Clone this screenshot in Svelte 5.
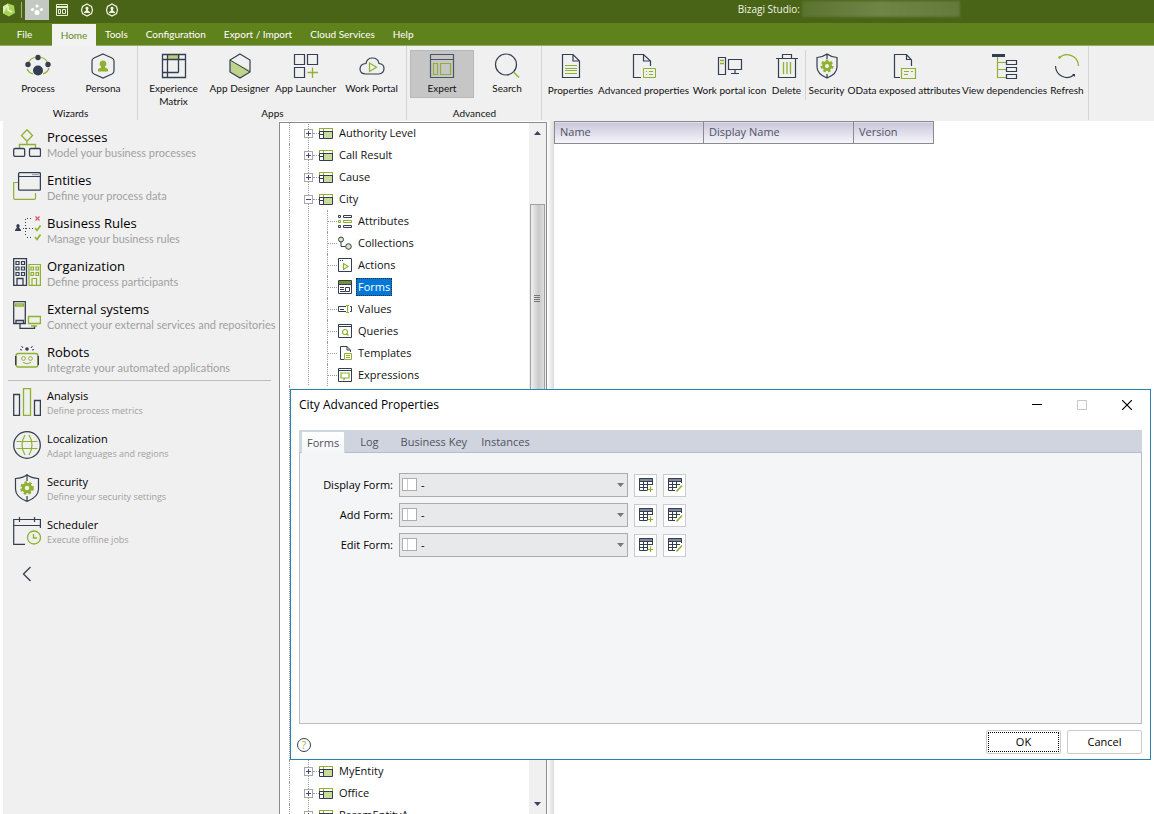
<script>
  const N = '#333f50';
  const G = '#8fb12f';

  const gear = (cx, cy, r) =>
    `<circle cx="${cx}" cy="${cy}" r="${r}" fill="none" stroke="${G}" stroke-width="3"/><circle cx="${cx}" cy="${cy}" r="${r + 2}" fill="none" stroke="${G}" stroke-width="2" stroke-dasharray="2.6 2.2"/>`;

  const icons = {
    logo: [14, `<path d="M6 0.5L12 2.5L13 10L7 13.5L1 10.5L1 3.5Z" fill="#a8d254"/><path d="M6 3V7L10 9" fill="none" stroke="#eef8d8" stroke-width="1.5"/><path d="M1 3.5L6 .5V3L3 8L1 10.5Z" fill="#d8efae"/>`],
    quickProcess: [14, `<g fill="#fff"><circle cx="7" cy="3" r="1.5"/><circle cx="2.5" cy="6.5" r="1.6"/><circle cx="11.5" cy="6.5" r="1.6"/><circle cx="7" cy="9.5" r="2.5"/></g>`],
    quickForm: [14, `<g fill="none" stroke="#e8f0d4"><path d="M1.5 1.5H12.5V12.5H1.5ZM1.5 4.5H12.5M1.5 3.5H12.5M3.5 6.5H5.5V10.5H3.5ZM7.5 6.5H10.5V10.5H7.5Z"/></g>`],
    quickPersona: [14, `<path d="M7 1L11.5 3.5L12.5 7L11.5 10.5L7 13L2.5 10.5L1.5 7L2.5 3.5Z" fill="none" stroke="#eef4e0" stroke-width="1.2"/><path d="M7 3.800A1.500 1.500 0 0 1 8 6.500L8 7.500L10 9V10H4V9L6 7.500V6.500A1.500 1.500 0 0 1 7 3.800Z" fill="#eef4e0"/>`],
    process: [28, `<path d="M4 12Q6 6 11 5.5M17 5.5Q22 6 24 12M3 17Q5 21 9 22M19 22Q24 20 25 16" fill="none" stroke="${G}" stroke-width="1.2"/><g fill="${N}"><circle cx="14" cy="5.500" r="2.700"/><circle cx="4" cy="12.500" r="2.700"/><circle cx="24" cy="12.500" r="2.700"/><circle cx="14" cy="18.500" r="5"/></g>`],
    persona: [28, `<path d="M14 2L23 6Q25 7 25 9V19Q25 21 23 22L14 26L5 22Q3 21 3 19V9Q3 7 5 6Z" fill="none" stroke="${N}" stroke-width="1.2"/><path d="M14 8.500A3.300 3.300 0 0 1 16 14.500L16 15.500L19 17V19.500H9V17L12 15.500V14.500A3.300 3.300 0 0 1 14 8.500Z" fill="${G}"/>`],
    matrix: [28, `<path d="M8 3H20V7H8Z" fill="#b9cf7d"/><path d="M2.500 2.500H25.500V25.500H2.500ZM2.500 7.500H25.500M7.500 2.500V25.500M18.500 2.500V20.500M2.500 20.500H18.500" fill="none" stroke="${N}" stroke-width="1.3"/>`],
    designer: [28, `<path d="M4 8L24 18V20L14 26L4 20Z" fill="#c0d38c"/><path d="M14 2L24 8V20L14 26L4 20V8Z" fill="none" stroke="${N}" stroke-width="1.2"/><path d="M4 8L24 20" stroke="${N}"/>`],
    launcher: [28, `<path d="M2.500 2.500H12.500V12.500H2.500ZM15.500 2.500H25.500V12.500H15.500ZM2.500 15.500H12.500V25.500H2.500Z" fill="none" stroke="${N}" stroke-width="1.2"/><path d="M20.500 15.500V26M15.500 20.500H26" stroke="${G}" stroke-width="1.3"/>`],
    portal: [28, `<path d="M8 22H20.500Q26 21.500 26 16.500Q26 12 21 11.500Q20 6 14.500 6Q9 6 8 11.500Q2 12 2 17Q2 22 8 22Z" fill="none" stroke="${N}" stroke-width="1.200"/><path d="M11.500 11V19.500L18.500 15.200Z" fill="none" stroke="${G}" stroke-width="1.200"/>`],
    expert: [28, `<path d="M2.500 2.500H25.500V25.500H2.500ZM2.500 7.500H25.500" fill="none" stroke="#4d5665" stroke-width="1.200"/><path d="M5.500 11.500H9.500V22.500H5.500ZM12.500 11.500H22.500V22.500H12.500Z" fill="none" stroke="${G}" stroke-width="1.200"/>`],
    search: [28, `<circle cx="13" cy="12.500" r="10.500" fill="none" stroke="${N}" stroke-width="1.200"/><path d="M20.500 20L26 25.500" stroke="${G}" stroke-width="1.400"/>`],
    properties: [28, `<path d="M5.500 2.500H16L22.500 9V25.500H5.500ZM16 2.500V9H22.500" fill="none" stroke="${N}" stroke-width="1.200"/><path d="M8 13.500H20M8 16.500H20M8 18.500H20M8 21.500H20" stroke="${G}"/>`],
    advanced: [28, `<path d="M11 25.500H3.500V2.500H13.500L20.500 9V14M13.500 2.500V9H20.500" fill="none" stroke="${N}" stroke-width="1.200"/><path d="M13.500 16.500H25.500V25.500H13.500ZM16 19.500H17M19 19.500H23M16 22.500H17M19 22.500H23" fill="none" stroke="${G}"/>`],
    portalIcon: [28, `<path d="M2.500 5.500H9.500V22.500H2.500ZM12.500 7.500H25.500V17.500H12.500ZM19 17.500V21.500M15 21.500H23" fill="none" stroke="${N}" stroke-width="1.200"/><path d="M4 8.500H8M4 11.500H8" stroke="${G}" stroke-width="1.300"/>`],
    trash: [28, `<path d="M3 6.500H25M9.500 6V2.500H18.500V6M5.500 6.500V25.500H22.500V6.500" fill="none" stroke="${N}" stroke-width="1.200"/><path d="M10.500 10V22M14 10V22M17.500 10V22" stroke="${G}" stroke-width="1.300"/>`],
    shield: [28, `<path d="M14 2Q18 5 24 5.500V15Q24 22 14 26Q4 22 4 15V5.500Q10 5 14 2ZM14 2V7M14 22V26" fill="none" stroke="${N}" stroke-width="1.200"/>${gear(14, 14, 3.500)}`],
    odata: [28, `<path d="M10 25.500H4.500V2.500H16.500L21.500 8V14M16.500 2.500V7.500H21.500" fill="none" stroke="${N}" stroke-width="1.200"/><path d="M11.500 16.500H25.500V26.500H11.500ZM14 19.500H19M21 19.500H23M14 22.500H18" fill="none" stroke="${G}" stroke-width="1.200"/>`],
    deps: [28, `<path d="M1 2H14V5H1Z" fill="${N}"/><path d="M6.500 5V25.500H15M6.500 10.500H15M6.500 17.500H15" fill="none" stroke="${G}" stroke-width="1.200"/><path d="M15.500 8.500H25.500V12.500H15.500ZM15.500 15.500H25.500V19.500H15.500ZM15.500 22.500H25.500V26.500H15.500Z" fill="none" stroke="${N}" stroke-width="1.200"/>`],
    refresh: [28, `<path d="M6 6A11.500 11.500 0 0 1 25.500 14" fill="none" stroke="${G}" stroke-width="1.300"/><circle cx="6.500" cy="5.500" r="1.200" fill="${G}"/><path d="M2.500 14A11.500 11.500 0 0 0 21 23" fill="none" stroke="${N}" stroke-width="1.200"/><path d="M19 22H22V25Z" fill="${N}"/>`],

    navProcesses: [28, `<path d="M14 .8L19.500 6.500L14 12.200L8.500 6.500ZM14 12V16M6.500 19V15.500H22.500V19" fill="none" stroke="${G}" stroke-width="1.300"/><rect x=".7" y="19.500" width="11" height="8" rx="1.500" fill="none" stroke="${N}" stroke-width="1.300"/><rect x="16.500" y="19.500" width="11" height="8" rx="1.500" fill="none" stroke="${N}" stroke-width="1.300"/>`],
    navEntities: [28, `<path d="M5 10.500H.7V26Q.7 27.400 2 27.400H21Q22.500 27.400 22.500 26V21" fill="none" stroke="${G}" stroke-width="1.200"/><rect x="5.600" y=".7" width="21.800" height="17.500" rx="1" fill="none" stroke="${N}" stroke-width="1.300"/><path d="M6 4.500H27" stroke="${N}"/><path d="M19.500 2.700H26" stroke="${N}" stroke-dasharray="1 1"/>`],
    navRules: [28, `<path d="M5 9A2 2 0 0 1 6 12.500L8 15V16H2V15L4 12.500A2 2 0 0 1 5 9Z" fill="${N}"/><path d="M10 13.500H20M12.500 4V22M14 3.500H20M14 22.500H20" fill="none" stroke="${N}" stroke-dasharray="1 2"/><path d="M22.500 1.500L26.500 5.500M26.500 1.500L22.500 5.500" stroke="#d9546b" stroke-width="1.200"/><path d="M22 13L24 15.500L27.500 10.500M22 22L24 24.500L27.500 19.500" fill="none" stroke="${G}" stroke-width="1.600"/>`],
    navOrg: [28, `<path d="M.7 .7H13.500V27.400H.7ZM4 27V20.500H10V27" fill="none" stroke="${N}" stroke-width="1.300"/><path d="M3 3.500H6V6.500H3ZM8.500 3.500H11.500V6.500H8.500ZM3 9H6V12H3ZM8.500 9H11.500V12H8.500ZM3 14.500H6V17.500H3ZM8.500 14.500H11.500V17.500H8.500Z" fill="none" stroke="${N}" stroke-width="1.200"/><path d="M16 27.400V6.500H27.400V27.400H16M19 27V20.500H23.500V27M18 9H20.500V12H18ZM23 9H25.500V12H23ZM18 14.500H20.500V17.500H18ZM23 14.500H25.500V17.500H23Z" fill="none" stroke="${G}" stroke-width="1.200"/>`],
    navExternal: [28, `<path d="M.7 .7H12.300V22.500H.7ZM3 22V19.500H10.500V22M7 23V27.400H21.500V25" fill="none" stroke="${N}" stroke-width="1.300"/><path d="M2.500 3H10.500V5H2.500ZM15.500 15.500H27.400V22.500H15.500ZM18 25H24" fill="none" stroke="${G}" stroke-width="1.300"/>`],
    navRobots: [28, `<circle cx="14" cy="5" r="1.800" fill="${N}"/><path d="M8.500 2L10 4M19.500 2L18 4M7 5.500L9 6M21 5.500L19 6" stroke="${N}"/><rect x="3" y="9.500" width="22" height="13.500" rx="2.500" fill="none" stroke="${G}" stroke-width="1.400"/><path d="M2.700 12V21M25.300 12V21" stroke="${N}" stroke-width="1.400"/><circle cx="10.500" cy="14.500" r="1.900" fill="none" stroke="${G}"/><circle cx="17.500" cy="14.500" r="1.900" fill="none" stroke="${G}"/><path d="M10 18.500Q14 21 18 18.500" fill="none" stroke="${G}"/>`],
    navAnalysis: [28, `<path d="M.7 6.500H6.500V27.400H.7ZM21.500 12.500H27.400V27.400H21.500Z" fill="none" stroke="${N}" stroke-width="1.300"/><path d="M10.500 .7H17.500V27.400H10.500Z" fill="none" stroke="${G}" stroke-width="1.300"/>`],
    navLocal: [28, `<circle cx="14" cy="14" r="13.300" fill="none" stroke="${N}" stroke-width="1.300"/><path d="M3.500 10.500H24.500M3.500 17.500H24.500M12 4Q6 14 12 24M16 4Q22 14 16 24" fill="none" stroke="${G}" stroke-width="1.200"/>`],
    navSecurity: [28, `<path d="M14 .7Q18 4 25.500 4.500V15Q25.500 23 14 27.400Q2.500 23 2.500 15V4.500Q10 4 14 .7ZM14 1V7M14 22V27" fill="none" stroke="${N}" stroke-width="1.200"/>${gear(14, 14, 3.800)}`],
    navScheduler: [28, `<path d="M12 27.400H.7V2.500H27.400V11M.7 8.500H27M6.500 0V5M21.500 0V5" fill="none" stroke="${N}" stroke-width="1.200"/><circle cx="21" cy="20.500" r="6.500" fill="none" stroke="${G}" stroke-width="1.300"/><path d="M20.500 17V21H24" fill="none" stroke="${G}" stroke-width="1.300"/>`],

    entity: [14, `<path d="M5 6H13V12.500H5Z" fill="#c9dc9c"/><path d="M.5 2V5M13.500 2V5M.5 2.500H13.500M4.500 5V2.500" stroke="${G}" fill="none"/><path d="M.5 5V12.500H13.500V5M0 5.500H14M4.500 5.500V12M.5 8.500H4.500" fill="none" stroke="${N}"/>`],
    attributes: [14, `<path d="M.5 1.500H2.500V3.500H.5ZM5.500 1.500H13.500V3.500H5.500ZM.5 11.500H2.500V13.500H.5ZM5.500 11.500H13.500V13.500H5.500Z" fill="none" stroke="${N}"/><path d="M.5 6.500H2.500V8.500H.5ZM5.500 6.500H13.500V8.500H5.500Z" fill="none" stroke="${G}"/>`],
    collections: [14, `<circle cx="3" cy="3.500" r="2.500" fill="#dbe6bd" stroke="${N}"/><circle cx="10.500" cy="10.500" r="2.800" fill="#dbe6bd" stroke="${N}"/><path d="M3 6V10.500H7.500" fill="none" stroke="${N}"/>`],
    actions: [14, `<path d="M.5 .5H13.500V13.500H.5Z" fill="none" stroke="${N}"/><path d="M2 2.500H6" stroke="${N}" stroke-dasharray="1 1"/><path d="M5.500 5.500V11.500L10 8.500Z" fill="none" stroke="${G}" stroke-width="1.200"/>`],
    forms: [14, `<path d="M.5 .5H13.500V13.500H.5ZM.5 4.500H13.500M2 7.500H6M2 9.500H6M2 11.500H7M7.500 7.500H11.500V11.500H7.500Z" fill="none" stroke="${N}"/><path d="M1 1H13V4H1Z" fill="#74903a"/>`],
    values: [14, `<path d="M8 4.500H.5V9.500H8M12 4.500H13.500V9.500H12" fill="none" stroke="${N}"/><path d="M2 7.500H6" stroke="${N}"/><path d="M8 3.500H11M9.500 3.500V10.500M8 10.500H11" stroke="${G}"/>`],
    queries: [14, `<path d="M.5 .5H13.500V13.500H.5ZM.5 2.500H13.500" fill="none" stroke="${N}"/><circle cx="7" cy="8" r="2.500" fill="none" stroke="${G}" stroke-width="1.200"/><path d="M8.500 9.500L10.500 11.500" stroke="${G}" stroke-width="1.200"/>`],
    templates: [14, `<path d="M6 13.500H2.500V.5H9L12.500 4V6M9 .5V4H12" fill="none" stroke="${N}"/><path d="M6.500 7.500H13.500V13.500H6.500ZM8 9.500H12M8 11.500H12" fill="none" stroke="${G}"/>`],
    expressions: [14, `<path d="M.5 .5H13.500V13.500H.5ZM.5 2.500H13.500" fill="none" stroke="${N}"/><path d="M3 5H11V10H7L6 11.500V10H3Z" fill="none" stroke="${G}" stroke-width="1.200"/>`],
    gridAdd: [16, `<path d="M1 1H15V4H1Z" fill="#7f8a9c"/><path d="M1.500 1.500H14.500V8M1.500 1.500V13.500H9M1.500 4.500H14.500M1.500 7.500H14.500M1.500 10.500H10M5.500 4.500V13.500M9.500 4.500V13.500" fill="none" stroke="${N}"/><path d="M12.500 9.500V15M10 12.500H15" stroke="${G}" stroke-width="1.200"/>`],
    gridEdit: [16, `<path d="M1 1H15V4H1Z" fill="#7f8a9c"/><path d="M14.500 6V1.500H1.500V13.500H8M1.500 4.500H14.500M1.500 7.500H13M1.500 10.500H10M5.500 4.500V13.500M9.500 4.500V11" fill="none" stroke="${N}"/><path d="M15 8.500L9.500 14.500" stroke="${G}" stroke-width="1.600"/>`]
  };

  const menus = ['Tools', 'Configuration', 'Export / Import', 'Cloud Services', 'Help'];

  const groups = [
    { title: 'Wizards', items: [['Process', 'process'], ['Persona', 'persona']] },
    { title: 'Apps', items: [['Experience Matrix', 'matrix'], ['App Designer', 'designer'], ['App Launcher', 'launcher'], ['Work Portal', 'portal']] },
    { title: 'Advanced', items: [['Expert', 'expert'], ['Search', 'search']] }
  ];

  const tools = [
    ['Properties', 'properties'],
    ['Advanced properties', 'advanced'],
    ['Work portal icon', 'portalIcon'],
    ['Delete', 'trash'],
    ['Security', 'shield'],
    ['OData exposed attributes', 'odata'],
    ['View dependencies', 'deps'],
    ['Refresh', 'refresh']
  ];

  const primary = [
    ['Processes', 'Model your business processes', 'navProcesses'],
    ['Entities', 'Define your process data', 'navEntities'],
    ['Business Rules', 'Manage your business rules', 'navRules'],
    ['Organization', 'Define process participants', 'navOrg'],
    ['External systems', 'Connect your external services and repositories', 'navExternal'],
    ['Robots', 'Integrate your automated applications', 'navRobots']
  ];
  const secondary = [
    ['Analysis', 'Define process metrics', 'navAnalysis'],
    ['Localization', 'Adapt languages and regions', 'navLocal'],
    ['Security', 'Define your security settings', 'navSecurity'],
    ['Scheduler', 'Execute offline jobs', 'navScheduler']
  ];

  const entitiesTop = ['Authority Level', 'Call Result', 'Cause', 'City'];
  const entitiesBottom = ['MyEntity', 'Office', 'ParamEntityA'];
  const children = ['Attributes', 'Collections', 'Actions', 'Forms', 'Values', 'Queries', 'Templates', 'Expressions'];

  const columns = ['Name', 'Display Name', 'Version'];
  const tabs = ['Forms', 'Log', 'Business Key', 'Instances'];
  const fields = ['Display Form:', 'Add Form:', 'Edit Form:'];

  let activeTab = $state('Forms');
  let selected = $state('Forms');
</script>

{#snippet icon(name)}
  <svg class="icon" width={icons[name][0]} height={icons[name][0]} viewBox="0 0 {icons[name][0]} {icons[name][0]}" aria-hidden="true">{@html icons[name][1]}</svg>
{/snippet}

{#snippet entityRow(name, open)}
  <div class="row entity">
    <button class="toggle" aria-expanded={open} aria-label={name}>
      <svg width="9" height="9" viewBox="0 0 9 9"><path d={open ? 'M2 4.5H7' : 'M2 4.5H7M4.5 2V7'} stroke="#3d4a80" /></svg>
    </button>
    <span class="stub"></span>
    {@render icon('entity')}
    <span class="name">{name}</span>
  </div>
{/snippet}

{#snippet navItem(item)}
  <li>
    <a href="#{item[2]}">
      {@render icon(item[2])}
      <span class="nav-text"><strong>{item[0]}</strong><small>{item[1]}</small></span>
    </a>
  </li>
{/snippet}

<div class="app">
  <header class="titlebar">
    <div class="quick">
      <span class="logo">{@render icon('logo')}</span>
      <button class="current" aria-label="Process">{@render icon('quickProcess')}</button>
      <button aria-label="Expert">{@render icon('quickForm')}</button>
      <button aria-label="Persona">{@render icon('quickPersona')}</button>
      <button aria-label="Persona">{@render icon('quickPersona')}</button>
    </div>
    <div class="app-title">Bizagi Studio:<span class="redacted"></span></div>
  </header>

  <nav class="menubar">
    <button class="file">File</button>
    <button class="active">Home</button>
    {#each menus as m}<button>{m}</button>{/each}
  </nav>

  <div class="ribbon">
    {#each groups as g}
      <section class="group">
        <div class="group-items">
          {#each g.items as [label, ic]}
            <button class="tool" class:pressed={label === 'Expert'} class:two-line={ic === 'matrix'}>{@render icon(ic)}<span>{label}</span></button>
          {/each}
        </div>
        <h2>{g.title}</h2>
      </section>
    {/each}
    <section class="group toolset">
      {#each tools as [label, ic]}
        <button class="tool" class:divided={label === 'Delete'}>{@render icon(ic)}<span>{label}</span></button>
      {/each}
    </section>
  </div>

  <main>
    <nav class="sidebar">
      <ul class="primary">{#each primary as item}{@render navItem(item)}{/each}</ul>
      <ul class="secondary">{#each secondary as item}{@render navItem(item)}{/each}</ul>
      <button class="collapse" aria-label="Collapse">
        <svg width="10" height="16" viewBox="0 0 10 16"><path d="M8.500 1L1.500 8L8.500 15" fill="none" stroke="#333f50" stroke-width="1.300" /></svg>
      </button>
    </nav>

    <section class="tree-panel">
      <div class="tree">
        {#each entitiesTop as e}{@render entityRow(e, e === 'City')}{/each}
        <div class="children">
          {#each children as c}
            <div class="row child">
              <span class="stub"></span>
              {@render icon(c.toLowerCase())}
              <button class="name" class:selected={selected === c} onclick={() => (selected = c)}>{c}</button>
            </div>
          {/each}
        </div>
        <div class="covered"></div>
        {#each entitiesBottom as e}{@render entityRow(e, false)}{/each}
      </div>
      <div class="scrollbar">
        <svg width="7" height="4" viewBox="0 0 7 4"><path d="M0 4L3.500 0L7 4Z" fill="#3c4260" /></svg>
        <div class="thumb"><i></i></div>
        <svg width="7" height="4" viewBox="0 0 7 4"><path d="M0 0L3.500 4L7 0Z" fill="#3c4260" /></svg>
      </div>
    </section>

    <div class="splitter"></div>

    <section class="content">
      <table>
        <thead><tr>{#each columns as c}<th>{c}</th>{/each}</tr></thead>
      </table>
    </section>
  </main>

  <div class="dialog" role="dialog" aria-labelledby="dialog-title">
    <div class="dialog-head">
      <h1 id="dialog-title">City Advanced Properties</h1>
      <button aria-label="Minimize"><svg width="10" height="10" viewBox="0 0 10 10"><path d="M0 4.500H10" stroke="#000" /></svg></button>
      <button aria-label="Maximize"><svg width="10" height="10" viewBox="0 0 10 10"><path d="M.5 .5H9.500V9.500H.5Z" fill="none" stroke="#c8c8c8" /></svg></button>
      <button aria-label="Close"><svg width="10" height="10" viewBox="0 0 10 10"><path d="M0 0L10 10M10 0L0 10" stroke="#000" stroke-width="1.200" /></svg></button>
    </div>
    <div class="tab-box">
      <div class="tabs" role="tablist">
        {#each tabs as t}
          <button role="tab" aria-selected={activeTab === t} class:active={activeTab === t} onclick={() => (activeTab = t)}>{t}</button>
        {/each}
      </div>
      <form class="fields">
        {#each fields as f, i}
          <div class="field">
            <label for="form-{i}">{f}</label>
            <div class="combo">
              <span class="swatch"></span>
              <select id="form-{i}"><option>-</option></select>
              <svg class="arrow" width="7" height="4" viewBox="0 0 7 4"><path d="M0 0H7L3.500 4Z" fill="#777" /></svg>
            </div>
            <button type="button" aria-label="New form">{@render icon('gridAdd')}</button>
            <button type="button" aria-label="Edit form">{@render icon('gridEdit')}</button>
          </div>
        {/each}
      </form>
    </div>
    <footer>
      <button class="help" aria-label="Help"><span>?</span></button>
      <button class="action default">OK</button>
      <button class="action">Cancel</button>
    </footer>
  </div>
</div>

<style>
  :global(body) { margin: 0; }
  .app, .app * { box-sizing: border-box; }
  .app {
    position: relative;
    display: flex;
    flex-direction: column;
    height: 100vh;
    overflow: hidden;
    background: #fff;
    color: #111;
    font: 11px/14px "Open Sans", "Noto Sans", sans-serif;
  }
  button { font: inherit; color: inherit; background: none; border: 0; padding: 0; margin: 0; }
  .icon { display: block; flex: none; }
  h1, h2, ul { margin: 0; padding: 0; font: inherit; }
  ul { list-style: none; }

  .titlebar { flex: none; display: flex; justify-content: space-between; height: 23px; background: #4a6417; }
  .quick { display: flex; }
  .quick button { width: 25px; height: 20px; display: grid; place-items: center; }
  .quick .current { width: 24px; background: #c5c9c3; }
  .logo { display: flex; align-items: center; width: 22px; height: 16px; margin: 2px 3px 0 0; padding-left: 2px; border-right: 1px solid #a5b286; }
  .app-title { display: flex; align-items: center; gap: 2px; height: 18px; margin-right: 194px; color: #f0f4e6; font-size: 10px; }
  .redacted { width: 158px; height: 16px; background: linear-gradient(90deg, #5b7330, #6f8548 50%, #64793c); filter: blur(1px); }

  .menubar { flex: none; display: flex; height: 23px; background: #5f821c; border-bottom: 1px solid #93a86c; color: #fff; }
  .menubar, .ribbon { font-family: Lato, "Open Sans", sans-serif; font-size: 10px; }
  .menubar button { padding: 0 9px; }
  .menubar .file { width: 52px; padding-right: 12px; }
  .menubar .active { width: 44px; height: 22px; margin-top: 1px; padding: 0; background: #f2f3f1; color: #648a1c; }

  .ribbon { flex: none; display: flex; height: 75px; background: #f0f0f0; line-height: 13px; }
  .group { display: flex; flex-direction: column; justify-content: space-between; height: 74px; padding: 4px 2px 0 3px; border-right: 1px solid #d4d4d4; }
  .group:first-child { padding-left: 6px; }
  .group h2 { text-align: center; }
  .group-items { display: flex; gap: 1px; height: 56px; }
  .tool { display: flex; flex-direction: column; align-items: center; gap: 2px; width: 65px; height: 48px; padding-top: 2px; white-space: nowrap; }
  .group:first-child .tool, .group:nth-child(3) .tool { width: 64px; }
  .tool.two-line { height: 60px; white-space: normal; }
  .tool.pressed { background: #c6c6c6; border: 1px solid #b8b8b8; padding-top: 1px; }
  .toolset { display: grid; grid-template-columns: 51px 95px 77px 38px 41px 114px 87px 38px; justify-content: start; }
  .toolset .tool { width: auto; gap: 4px; height: 50px; }
  .toolset .divided { border-right: 1px solid #d4d4d4; }

  main { flex: 1; min-height: 0; display: flex; }
  .sidebar { flex: none; width: 276px; margin-left: 3px; padding-top: 1px; background: #f0f0f0; overflow: hidden; }
  .primary { margin: 0 8px 0 5px; padding-left: 5px; border-bottom: 1px solid #bdbdbd; }
  .secondary { margin: 0 5px; padding-left: 5px; }
  .sidebar a { display: flex; gap: 6px; height: 43px; padding-top: 7px; color: #000; text-decoration: none; white-space: nowrap; }
  .nav-text { display: flex; flex-direction: column; }
  .nav-text strong { font-weight: 400; font-size: 13px; line-height: 16px; }
  .nav-text small { color: #a0a0a0; font-family: Lato, "Open Sans", sans-serif; font-size: 11px; line-height: 15px; }
  .secondary strong { font-size: 11px; line-height: 15px; }
  .secondary small { font-family: inherit; font-size: 9px; line-height: 15px; }
  .collapse { display: block; margin: 13px 0 0 19px; }

  .tree-panel { flex: none; display: flex; width: 268px; margin-top: 1px; border: 1px solid #8b8b8b; border-bottom: 0; overflow: hidden; background: #fff; }
  .tree { flex: 1; margin-top: -1px; padding-left: 9px; }
  .tree > .row, .children, .covered { border-left: 1px dotted #9a9a9a; }
  .row { display: flex; align-items: center; height: 22px; }
  .entity { padding-left: 14px; }
  .entity, .children { background: repeating-linear-gradient(#a0a0a0 0 1px, transparent 1px 2px) 18px 0 / 1px 100% no-repeat; }
  .toggle { flex: none; width: 9px; height: 9px; background: #fff; outline: 1px solid #a8a8a8; outline-offset: -1px; display: grid; }
  .stub { width: 6px; border-top: 1px dotted #9a9a9a; }
  .entity .name { margin-left: 6px; }
  .children { padding-left: 37px; }
  .child { border-left: 1px dotted #9a9a9a; }
  .child .stub { width: 9px; margin-right: 1px; }
  .child .name { margin-left: 4px; padding: 2px; }
  .child .selected { background: #0078d7; color: #fff; outline: 1px dotted #2b2b2b; outline-offset: -1px; }
  .covered { height: 374px; }
  .scrollbar { flex: none; display: flex; flex-direction: column; align-items: center; width: 17px; padding: 8px 1px 8px 0; background: #f0f0f0; }
  .thumb { display: grid; place-items: center; width: 15px; height: 189px; margin: 69px 0 auto; border: 1px solid #a0a0a0; background: linear-gradient(90deg, #f0f0f0, #c9c9c9 60%, #dedede); }
  .thumb i { width: 6px; height: 7px; background: repeating-linear-gradient(#777 0 1px, transparent 1px 2px); }
  .splitter { flex: none; width: 7px; background: linear-gradient(90deg, #fff, #dcdcdc); }

  .content { flex: 1; }
  table { border-collapse: collapse; table-layout: fixed; width: 380px; }
  th { height: 22px; padding: 0 5px 2px; border: 1px solid #8b8b8b; background: linear-gradient(#c9c6db, #f7f6fb); color: #4e5360; font-weight: 400; text-align: left; }
  th:nth-child(1) { width: 149px; }
  th:nth-child(2) { width: 150px; }

  .dialog { position: absolute; top: 389px; left: 290px; right: 3px; display: flex; flex-direction: column; height: 371px; padding: 0 8px; background: #fff; border: 1px solid #2784b0; }
  .dialog-head { display: flex; align-items: center; height: 30px; margin-right: -7px; }
  .dialog-head h1 { flex: 1; color: #000; font-size: 12px; }
  .dialog-head button { display: grid; place-items: center; width: 45px; height: 30px; }
  .tab-box { flex: 1; display: flex; flex-direction: column; margin-top: 10px; border: 1px solid #b9bcc2; border-top: 0; background: #f4f5f7; }
  .tabs { display: flex; height: 23px; margin: 0 -1px; padding: 1px 2px 0; background: #d0d4de; border-bottom: 1px solid #b9bcc2; color: #4e5360; }
  .tabs button { padding: 0 10px; }
  .tabs button:nth-child(2) { padding: 0 12px 0 15px; }
  .tabs button:nth-child(4) { padding: 0 4px; }
  .tabs .active { height: 22px; padding: 0 5px; background: linear-gradient(#fff, #f4f5f7); border: 1px solid #c4dedd; border-bottom: 0; border-radius: 2px 2px 0 0; }
  .fields { display: flex; flex-direction: column; gap: 6px; padding-top: 20px; }
  .field { display: flex; align-items: center; height: 24px; color: #000; }
  .field label { width: 93px; margin-right: 6px; text-align: right; }
  .combo { position: relative; width: 229px; margin-right: 6px; }
  .combo select { appearance: none; display: block; width: 100%; height: 24px; padding: 0 20px 0 21px; border: 1px solid #acacac; border-radius: 0; background: #e8e9ea; color: #000; font: inherit; }
  .swatch { position: absolute; top: 5px; left: 3px; width: 15px; height: 13px; background: linear-gradient(90deg, #fff 4px, #ccc 4px 5px, #fff 5px); border: 1px solid #adadad; }
  .arrow { position: absolute; top: 10px; right: 4px; }
  .field button { display: grid; place-items: center; width: 23px; height: 23px; margin-right: 6px; border: 1px solid #c9cbce; background: #fff; }
  footer { display: flex; align-items: center; gap: 6px; height: 35px; }
  .help { width: 14px; height: 14px; margin: 6px auto 0 -2px; border: 1px solid #333f50; border-radius: 50%; color: #8fb12f; font-size: 10px; line-height: 12px; }
  .action { width: 75px; height: 24px; border: 1px solid #cbcbcb; border-radius: 2px; color: #000; }
  .action.default { outline: 1px dotted #000; outline-offset: -3px; }
</style>
